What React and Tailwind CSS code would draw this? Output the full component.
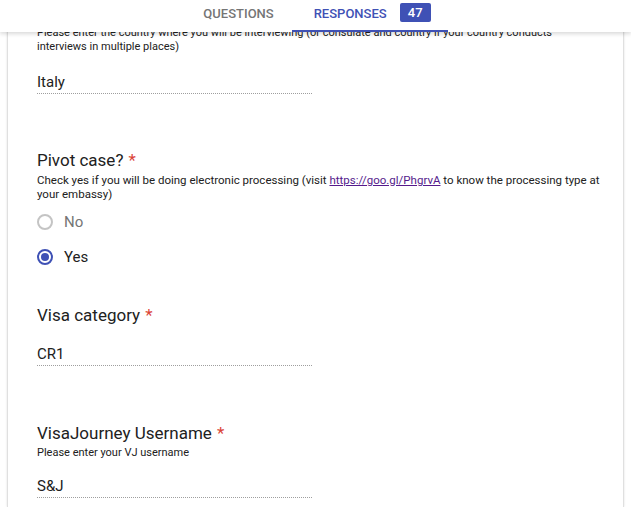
const font = { fontFamily: 'Roboto, "Liberation Sans", Arial, sans-serif' };

function Required() {
  return <span className="ml-[5px] text-[#db4437]">*</span>;
}

function Answer({ value }) {
  return (
    <div className="w-[275px] border-b border-dotted border-[#9e9e9e]">
      <div className="text-[15px] leading-[22px] text-[#212121]">{value}</div>
    </div>
  );
}

function Radio({ label, checked }) {
  return (
    <div className="flex items-center h-[20px]">
      <span
        className={
          checked
            ? 'flex h-[16px] w-[16px] items-center justify-center rounded-full border-2 border-[#3f51b5]'
            : 'h-[16px] w-[16px] rounded-full border-2 border-[#c4c4c4]'
        }
      >
        {checked && <span className="h-[8px] w-[8px] rounded-full bg-[#3f51b5]" />}
      </span>
      <span className={checked ? 'ml-[11px] text-[15px] text-[#212121]' : 'ml-[11px] text-[15px] text-[#757575]'}>
        {label}
      </span>
    </div>
  );
}

export default function App() {
  return (
    <div className="min-h-[507px] bg-white" style={font}>
      <header className="sticky top-0 z-10 h-[32px] bg-white shadow-[0_2px_4px_rgba(0,0,0,0.15)]">
        <div className="flex h-full items-start justify-center">
          <div className="ml-[2px] flex h-full">
            <div className="px-[18px] pt-[4px] text-[13px] font-medium text-[#757575]">QUESTIONS</div>
            <div className="flex h-full items-start gap-[13px] border-b-2 border-[#3f51b5] pl-[22px] pr-[17px] pt-[3px]">
              <span className="pt-[1px] text-[13px] font-medium text-[#3f51b5]">RESPONSES</span>
              <span className="flex h-[19px] w-[31px] items-center justify-center rounded-[2px] bg-[#3f51b5] text-[13px] font-medium text-white">
                47
              </span>
            </div>
          </div>
        </div>
      </header>

      <main className="mx-[7px] mt-[-6px] h-[481px] border-x border-[#e0e0e0] pl-[29px] pr-[22px] shadow-[0_0_2px_rgba(0,0,0,0.12)]">
        <p className="text-[11px] leading-[14px] text-[#212121]">
          Please enter the country where you will be interviewing (or consulate and country if your country conducts
          interviews in multiple places)
        </p>
        <div className="mt-[17px]">
          <Answer value="Italy" />
        </div>

        <section className="mt-[56px]">
          <h2 className="text-[17px] leading-[20px] text-[#212121]">
            Pivot case?
            <Required />
          </h2>
          <p className="mt-[3px] text-[11.5px] leading-[14px] text-[#212121]">
            Check yes if you will be doing electronic processing (visit{' '}
            <a href="#" className="text-[#551a8b] underline">
              https://goo.gl/PhgrvA
            </a>{' '}
            to know the processing type at your embassy)
          </p>
          <div className="mt-[11px] flex flex-col gap-[15px]">
            <Radio label="No" />
            <Radio label="Yes" checked />
          </div>
        </section>

        <section className="mt-[38px]">
          <h2 className="text-[17px] leading-[20px] text-[#212121]">
            Visa category
            <Required />
          </h2>
          <div className="mt-[18px]">
            <Answer value="CR1" />
          </div>
        </section>

        <section className="mt-[57px]">
          <h2 className="text-[17px] leading-[20px] text-[#212121]">
            VisaJourney Username
            <Required />
          </h2>
          <p className="mt-[3px] text-[11px] leading-[14px] text-[#212121]">Please enter your VJ username</p>
          <div className="mt-[15px]">
            <Answer value="S&J" />
          </div>
        </section>
      </main>
    </div>
  );
}
